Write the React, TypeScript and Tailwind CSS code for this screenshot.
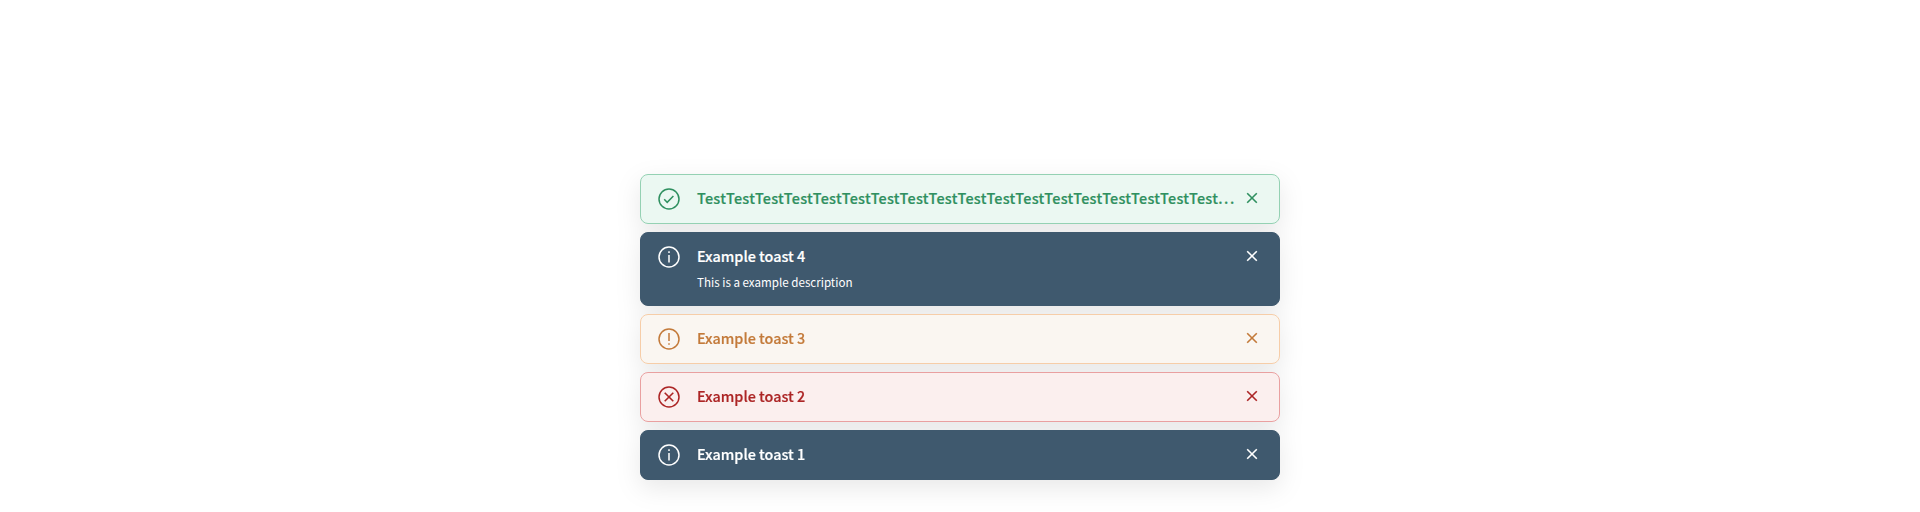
import type { ReactNode } from "react";

type Kind = "success" | "info" | "warning" | "error";

const tones: Record<Kind, string> = {
  success: "bg-[#ebf8f2] border-[#94d1b3] text-[#2f9060]",
  info: "bg-[#3f596e] border-[#3f596e] text-white",
  warning: "bg-[#faf6f1] border-[#f6cda8] text-[#c37a3a]",
  error: "bg-[#fbefee] border-[#e9a0a0] text-[#ac2525]",
};

const glyphs: Record<Kind, ReactNode> = {
  success: <path d="M6.2 11.2l3 3.1 6.2-6.4" strokeWidth="1.5" />,
  info: <path d="M11 9v7.6M11 5.3v1.6" strokeWidth="1.5" />,
  warning: <path d="M11 5v8.1M11 15.2v1.6" strokeWidth="1.5" />,
  error: <path d="M6.7 6.7l8.6 8.6M15.3 6.7l-8.6 8.6" strokeWidth="1.6" />,
};

type ToastData = { kind: Kind; title: string; truncated?: boolean; description?: string };

const toasts: ToastData[] = [
  { kind: "success", title: "Test".repeat(18), truncated: true },
  { kind: "info", title: "Example toast 4", description: "This is a example description" },
  { kind: "warning", title: "Example toast 3" },
  { kind: "error", title: "Example toast 2" },
  { kind: "info", title: "Example toast 1" },
];

function Toast({ kind, title, truncated, description }: ToastData) {
  return (
    <div
      className={`${tones[kind]} ${description ? "h-[74px]" : "h-[50px]"} flex w-[640px] items-start rounded-lg border pt-[13px] pr-[21px] pl-[17px]`}
    >
      <svg width="22" height="22" viewBox="0 0 22 22" fill="none" stroke="currentColor" className="shrink-0">
        <circle cx="11" cy="11" r="10" strokeWidth="1.5" />
        {glyphs[kind]}
      </svg>
      <div className="ml-[17px] min-w-0 flex-1 whitespace-nowrap">
        <div
          className={`text-[14.4px] leading-[19px] font-medium [-webkit-text-stroke:0.2px_currentColor] ${truncated ? "tracking-[0.27px]" : ""}`}
        >
          {title}
          {truncated && <span className="tracking-[1.6px]">...</span>}
        </div>
        {description && <div className="mt-1.5 text-[11.6px] leading-[22px]">{description}</div>}
      </div>
      <button aria-label="Close" className="mt-[4px] shrink-0">
        <svg width="12" height="12" viewBox="0 0 12 12" fill="none" stroke="currentColor" strokeWidth="1.6">
          <path d="M1.2 1.2l9.6 9.6M10.8 1.2l-9.6 9.6" />
        </svg>
      </button>
    </div>
  );
}

export default function App() {
  return (
    <div className="flex h-[512px] w-full flex-col items-center justify-end bg-white pb-8 font-['Noto_Sans_CJK_SC',sans-serif]">
      <div className="flex flex-col gap-2 drop-shadow-[0_8px_12px_rgba(0,0,0,0.09)]">
        {toasts.map((t, i) => (
          <Toast key={i} {...t} />
        ))}
      </div>
    </div>
  );
}
